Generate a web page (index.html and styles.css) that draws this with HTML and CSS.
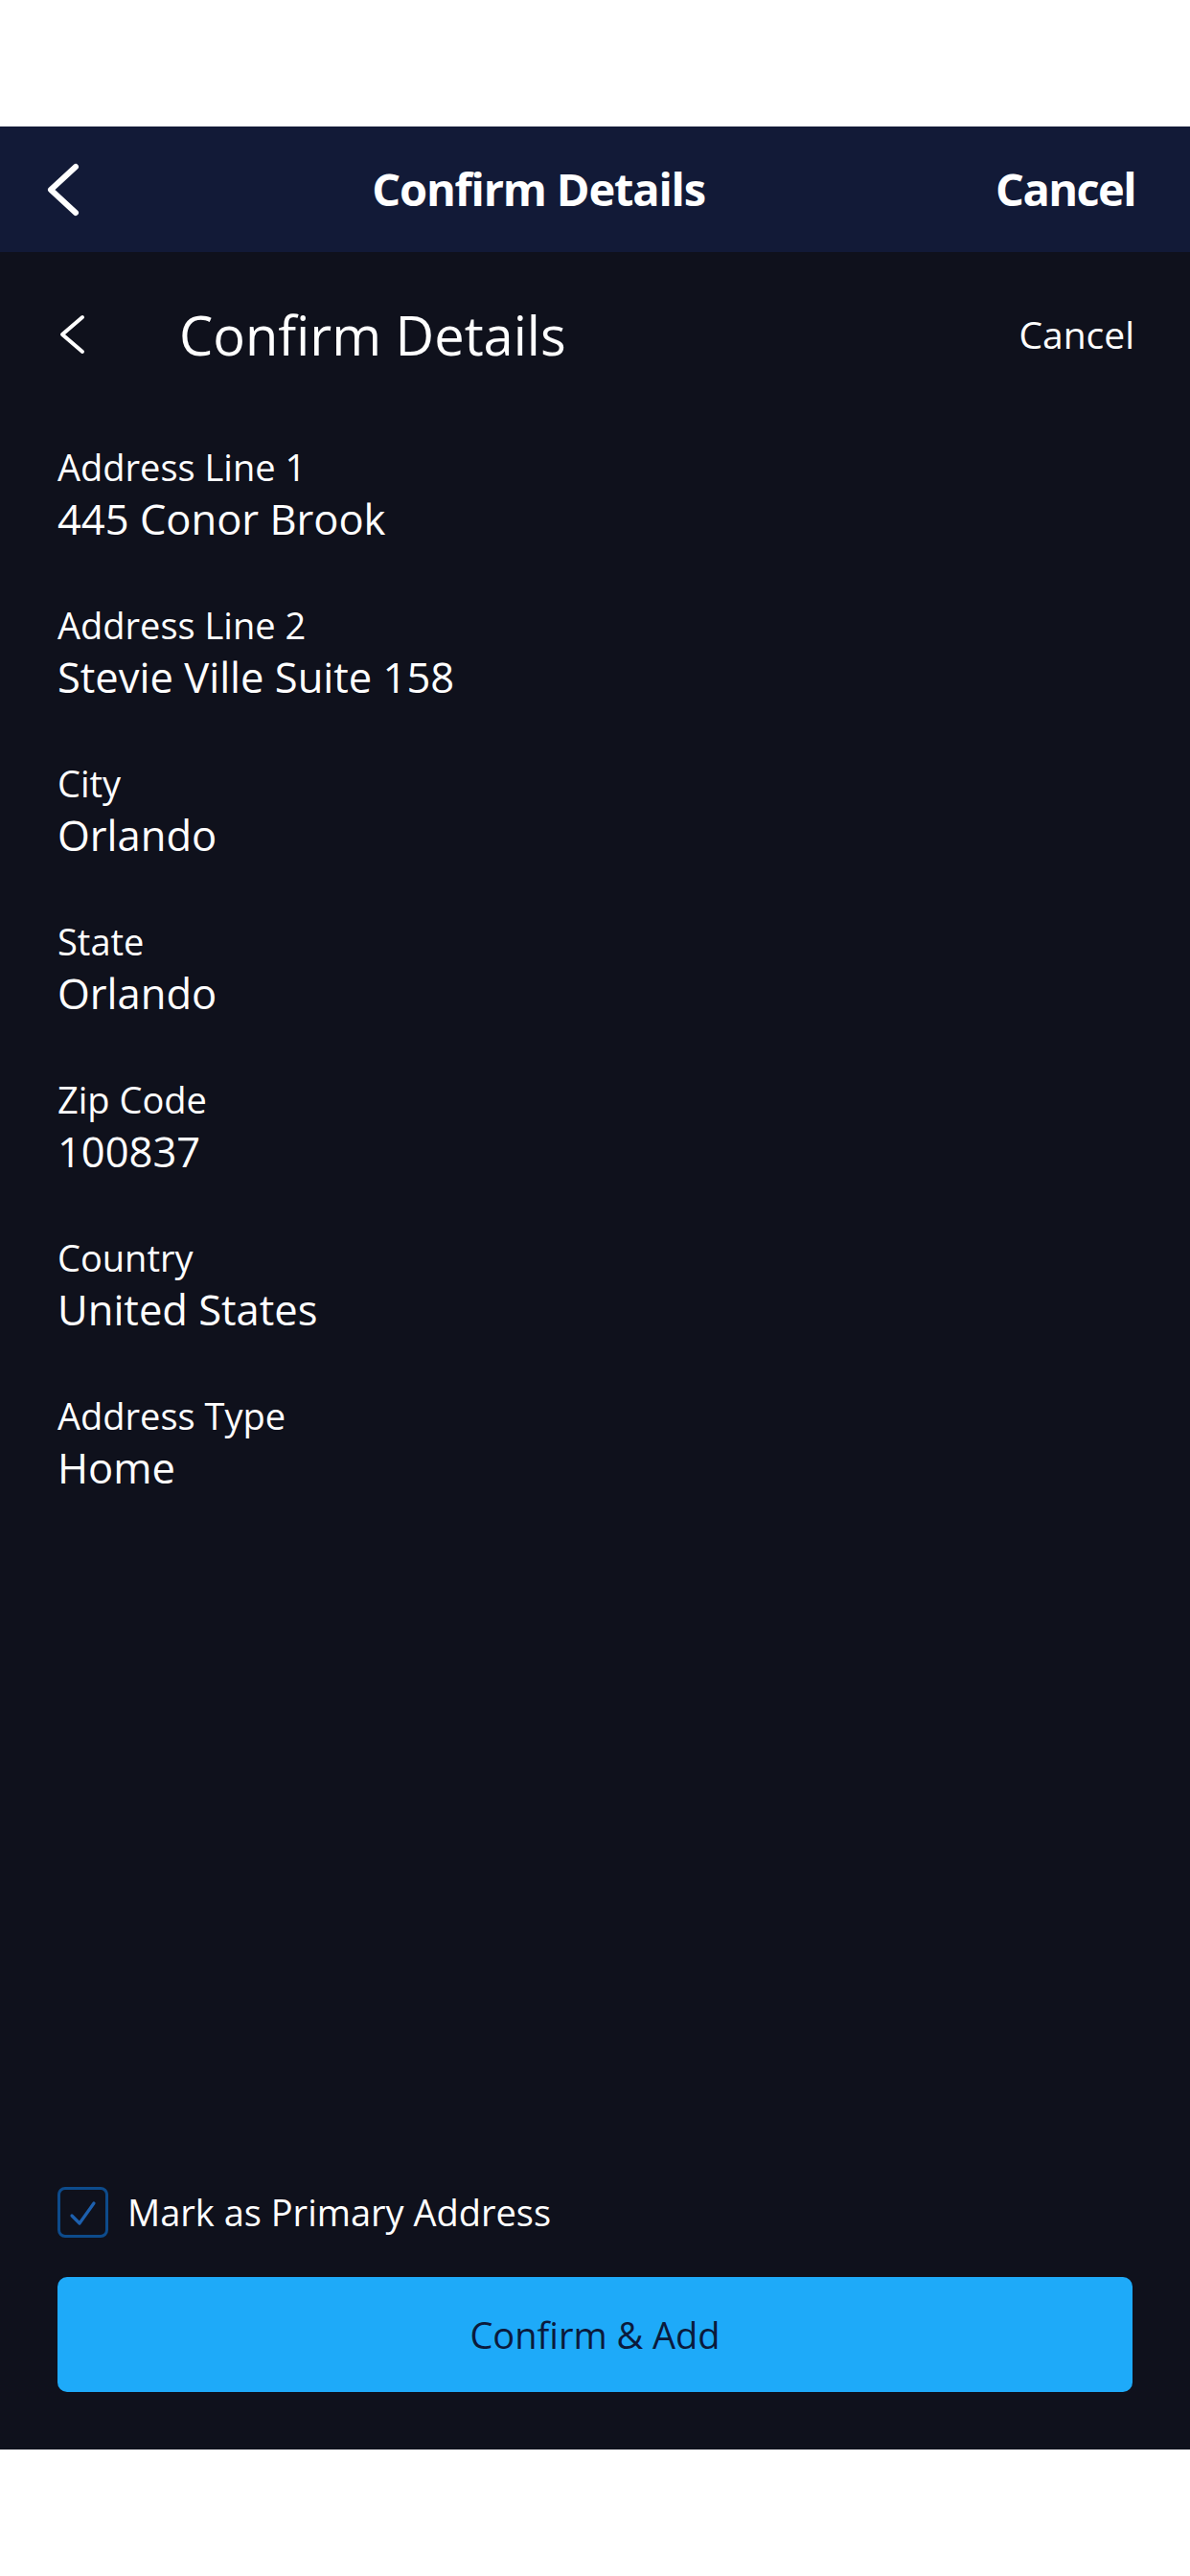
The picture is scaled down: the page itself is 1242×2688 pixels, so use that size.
FILE: index.html
```html
<!DOCTYPE html>
<html lang="en">
<head>
<meta charset="utf-8">
<title>Confirm Details</title>
<link rel="stylesheet" href="styles.css">
</head>
<body>
<div class="status-area"></div>
<header class="navbar">
  <svg class="nav-back" width="38" height="60" viewBox="0 0 38 60" aria-hidden="true">
    <polyline points="32,6 6,30 32,54" fill="none" stroke="#ffffff" stroke-width="6" stroke-linecap="round" stroke-linejoin="round"/>
  </svg>
  <h1 class="nav-title">Confirm Details</h1>
  <span class="nav-cancel">Cancel</span>
</header>
<main class="screen">
  <div class="head">
    <div class="head-left">
      <svg class="head-back" width="30" height="44" viewBox="0 0 30 44" aria-hidden="true">
        <polyline points="26,4 5,22 26,40" fill="none" stroke="#ffffff" stroke-width="4" stroke-linecap="round" stroke-linejoin="round"/>
      </svg>
      <h2 class="head-title">Confirm Details</h2>
    </div>
    <span class="head-cancel">Cancel</span>
  </div>
  <dl class="fields">
    <div class="field"><dt class="label">Address Line 1</dt><dd class="value">445 Conor Brook</dd></div>
    <div class="field"><dt class="label">Address Line 2</dt><dd class="value">Stevie Ville Suite 158</dd></div>
    <div class="field"><dt class="label">City</dt><dd class="value">Orlando</dd></div>
    <div class="field"><dt class="label">State</dt><dd class="value">Orlando</dd></div>
    <div class="field"><dt class="label">Zip Code</dt><dd class="value">100837</dd></div>
    <div class="field"><dt class="label">Country</dt><dd class="value">United States</dd></div>
    <div class="field"><dt class="label">Address Type</dt><dd class="value">Home</dd></div>
  </dl>
  <div class="footer">
    <label class="check-row">
      <span class="checkbox">
        <svg width="47" height="47" viewBox="0 0 47 47" aria-hidden="true">
          <polyline points="12,27 20,35 35,14" fill="none" stroke="#1d60ae" stroke-width="3.2" stroke-linecap="round" stroke-linejoin="round"/>
        </svg>
      </span>
      <span class="check-text">Mark as Primary Address</span>
    </label>
    <button class="confirm-btn" type="button">Confirm &amp; Add</button>
  </div>
</main>
<div class="home-area"></div>
</body>
</html>
```

FILE: styles.css
```css
* {
  box-sizing: border-box;
}

html, body {
  margin: 0;
  padding: 0;
  background: #ffffff;
}

body {
  font-family: "Open Sans", "Noto Sans", sans-serif;
  color: #ffffff;
  width: 1242px;
}

.status-area {
  height: 132px;
  background: #ffffff;
}

.navbar {
  height: 131px;
  background: #121a37;
  display: flex;
  align-items: center;
  justify-content: space-between;
  padding: 0 57px 0 47px;
}

.nav-back {
  display: block;
  flex: none;
}

.nav-title {
  margin: 0;
  font-size: 47px;
  font-weight: 700;
  letter-spacing: -1.2px;
  line-height: 1.36;
}

.nav-cancel {
  font-size: 47px;
  font-weight: 700;
  letter-spacing: -1.6px;
  line-height: 1.36;
}

.screen {
  height: 2293px;
  background: #0f111c;
  display: flex;
  flex-direction: column;
  padding: 46px 60px 60px 60px;
}

.head {
  height: 80px;
  display: flex;
  align-items: center;
  justify-content: space-between;
}

.head-left {
  display: flex;
  align-items: center;
  gap: 97px;
}

.head-back {
  display: block;
  flex: none;
}

.head-title {
  margin: 0;
  font-size: 56px;
  font-weight: 400;
  line-height: 80px;
}

.head-cancel {
  font-size: 39px;
  line-height: 80px;
  margin-right: -2px;
}

.fields {
  margin: 73px 0 0 0;
  display: flex;
  flex-direction: column;
  gap: 55px;
}

.field {
  display: flex;
  flex-direction: column;
}

.label {
  font-size: 38px;
  line-height: 50px;
  margin: 0;
}

.value {
  font-size: 43.5px;
  line-height: 60px;
  margin: 0;
}

.footer {
  margin-top: auto;
  display: flex;
  flex-direction: column;
  gap: 41px;
}

.check-row {
  display: flex;
  align-items: center;
  gap: 20px;
  height: 53px;
}

.checkbox {
  width: 53px;
  height: 53px;
  border: 3px solid #0d4b8b;
  border-radius: 8px;
  flex: none;
  display: block;
}

.checkbox svg {
  display: block;
}

.check-text {
  font-size: 38px;
  line-height: 53px;
}

.confirm-btn {
  height: 120px;
  width: 100%;
  border: none;
  border-radius: 10px;
  background: #1eaaf9;
  color: #0b1a3c;
  font-family: "Open Sans", "Noto Sans", sans-serif;
  font-size: 38px;
  font-weight: 400;
  padding: 0;
  margin: 0;
}

.home-area {
  height: 132px;
  background: #ffffff;
}
```
